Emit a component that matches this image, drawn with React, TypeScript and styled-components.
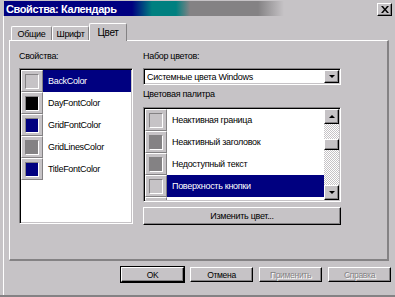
import React from 'react';
import styled, { createGlobalStyle, css } from 'styled-components';

const BG = '#c6c3c6';
const DARK = '#848284';
const NAVY = '#000080';

const Global = createGlobalStyle`
  html, body { margin: 0; padding: 0; background: ${BG}; }
  * { box-sizing: border-box; }
`;

const Window = styled.div`
  width: 395px;
  height: 297px;
  background: ${BG};
  display: flex;
  flex-direction: column;
  padding: 1px 3px 0 3px;
  border-bottom: 2px solid ${DARK};
  font-family: "Liberation Sans", Arial, sans-serif;
  font-size: 9px;
  letter-spacing: -0.3px;
  color: #000;
  overflow: hidden;
`;

const TitleBar = styled.div`
  height: 15px;
  margin-left: 1px;
  display: flex;
  align-items: center;
  justify-content: space-between;
  padding: 0 0 0 2px;
  background: linear-gradient(
    to right,
    ${NAVY} 0px,
    ${NAVY} 128px,
    #008080 148px,
    #008080 172px,
    ${DARK} 186px,
    ${DARK} 254px,
    ${BG} 280px
  );
`;

const Title = styled.span`
  color: #fff;
  font-weight: bold;
  font-size: 11px;
  letter-spacing: -0.4px;
`;

const raised = css`
  background: ${BG};
  border-top: 1px solid #fff;
  border-left: 1px solid #fff;
  border-right: 1px solid #000;
  border-bottom: 1px solid #000;
  box-shadow: inset -1px -1px 0 ${DARK};
`;

const sunken = css`
  border-top: 1px solid ${DARK};
  border-left: 1px solid ${DARK};
  border-right: 1px solid #fff;
  border-bottom: 1px solid #fff;
  box-shadow: inset 1px 1px 0 #000, inset -1px -1px 0 ${BG};
`;

const CloseButton = styled.div`
  ${raised};
  width: 15px;
  height: 13px;
  display: flex;
  align-items: center;
  justify-content: center;
  margin-top: 1px;
`;

const Body = styled.div`
  flex: 1;
  display: flex;
  flex-direction: column;
  border-left: 1px solid #fff;
  padding: 7px 0 0 5px;
`;

const TabStrip = styled.div`
  display: flex;
  align-items: flex-end;
  height: 17px;
  padding-left: 2px;
  position: relative;
  z-index: 1;
`;

const Tab = styled.div<{ $w: number; $active?: boolean }>`
  width: ${(p) => p.$w}px;
  height: ${(p) => (p.$active ? 18 : 14)}px;
  margin-bottom: ${(p) => (p.$active ? -1 : 0)}px;
  background: ${BG};
  border-top: 1px solid #fff;
  border-left: 1px solid #fff;
  border-right: 1px solid ${DARK};
  border-radius: 2px 2px 0 0;
  display: flex;
  justify-content: center;
  padding-top: ${(p) => (p.$active ? 3 : 2)}px;
  font-size: ${(p) => (p.$active ? 10 : 9)}px;
`;

const Panel = styled.div`
  width: 380px;
  height: 221px;
  border-top: 1px solid #fff;
  border-left: 1px solid #fff;
  border-right: 2px solid ${DARK};
  border-bottom: 2px solid ${DARK};
  padding: 9px 0 0 9px;
  display: grid;
  grid-template-columns: 114px 198px;
  column-gap: 10px;
  align-items: start;
`;

const Column = styled.div`
  display: flex;
  flex-direction: column;
`;

const Label = styled.div<{ $top?: number; $bottom?: number }>`
  height: 12px;
  line-height: 12px;
  margin-top: ${(p) => p.$top ?? 0}px;
  margin-bottom: ${(p) => p.$bottom ?? 6}px;
`;

const ListBox = styled.div<{ $h: number }>`
  ${sunken};
  height: ${(p) => p.$h}px;
  background: #fff;
  padding: 1px;
  display: flex;
  overflow: hidden;
`;

const Rows = styled.div`
  flex: 1;
  display: flex;
  flex-direction: column;
  overflow: hidden;
`;

const Row = styled.div`
  display: flex;
  height: 22px;
  flex-shrink: 0;
`;

const SwatchCell = styled.div`
  width: 22px;
  height: 22px;
  flex-shrink: 0;
  background: ${BG};
  border-top: 1px solid #fff;
  border-left: 1px solid #fff;
  border-right: 1px solid ${DARK};
  border-bottom: 1px solid ${DARK};
  display: flex;
  align-items: center;
  justify-content: center;
`;

const Swatch = styled.div<{ $c: string }>`
  width: 14px;
  height: 15px;
  background: ${(p) => p.$c};
  border-top: 1px solid ${DARK};
  border-left: 1px solid ${DARK};
  border-right: 1px solid #fff;
  border-bottom: 1px solid #fff;
`;

const RowText = styled.div<{ $sel?: boolean }>`
  flex: 1;
  line-height: 22px;
  padding-left: 5px;
  white-space: nowrap;
  overflow: hidden;
  background: ${(p) => (p.$sel ? NAVY : '#fff')};
  color: ${(p) => (p.$sel ? '#fff' : '#000')};
`;

const Combo = styled.div`
  ${sunken};
  height: 17px;
  background: #fff;
  display: flex;
  align-items: center;
  padding: 1px 1px 1px 3px;
`;

const ComboText = styled.div`
  flex: 1;
  white-space: nowrap;
  overflow: hidden;
`;

const ArrowButton = styled.div<{ $h?: number }>`
  ${raised};
  width: 15px;
  height: ${(p) => p.$h ?? 13}px;
  flex-shrink: 0;
  display: flex;
  align-items: center;
  justify-content: center;
`;

const Triangle = styled.div<{ $up?: boolean }>`
  width: 0;
  height: 0;
  border-left: 3px solid transparent;
  border-right: 3px solid transparent;
  ${(p) =>
    p.$up
      ? css`border-bottom: 3px solid #000;`
      : css`border-top: 3px solid #000;`}
`;

const ScrollBar = styled.div`
  width: 15px;
  flex-shrink: 0;
  display: flex;
  flex-direction: column;
`;

const Track = styled.div`
  flex: 1;
  background: repeating-conic-gradient(#fff 0 25%, ${BG} 0 50%) 0 0 / 2px 2px;
`;

const Thumb = styled.div`
  ${raised};
  height: 11px;
  margin-top: 15px;
`;

const WideButton = styled.div`
  ${raised};
  height: 18px;
  margin-top: 5px;
  display: flex;
  align-items: center;
  justify-content: center;
`;

const ButtonRow = styled.div`
  display: flex;
  justify-content: flex-end;
  gap: 6px;
  margin-top: 6px;
  padding-right: 1px;
`;

const DlgButton = styled.div<{ $default?: boolean; $disabled?: boolean }>`
  ${raised};
  width: 63px;
  height: 15px;
  display: flex;
  align-items: center;
  justify-content: center;
  font-size: 8.5px;
  color: ${(p) => (p.$disabled ? DARK : '#000')};
  text-shadow: ${(p) => (p.$disabled ? '1px 1px 0 #fff' : 'none')};
  ${(p) =>
    p.$default &&
    css`
      outline: 1px solid #000;
    `}
`;

const props = [
  { name: 'BackColor', color: BG, sel: true },
  { name: 'DayFontColor', color: '#000' },
  { name: 'GridFontColor', color: NAVY },
  { name: 'GridLinesColor', color: DARK },
  { name: 'TitleFontColor', color: NAVY },
];

const palette = [
  { name: 'Неактивная граница', color: BG },
  { name: 'Неактивный заголовок', color: DARK },
  { name: 'Недоступный текст', color: DARK },
  { name: 'Поверхность кнопки', color: BG, sel: true },
  { name: '', color: '#000' },
];

export default function App() {
  return (
    <>
      <Global />
      <Window>
        <TitleBar>
          <Title>Свойства: Календарь</Title>
          <CloseButton>
            <svg width="8" height="7" viewBox="0 0 8 7">
              <path d="M0 0h2l2 2.5L6 0h2L5 3.5 8 7H6L4 4.5 2 7H0l3-3.5z" fill="#000" />
            </svg>
          </CloseButton>
        </TitleBar>
        <Body>
          <TabStrip>
            <Tab $w={41}>Общие</Tab>
            <Tab $w={37}>Шрифт</Tab>
            <Tab $w={38} $active>
              Цвет
            </Tab>
          </TabStrip>
          <Panel>
            <Column>
              <Label>Свойства:</Label>
              <ListBox $h={156}>
                <Rows>
                  {props.map((p) => (
                    <Row key={p.name}>
                      <SwatchCell>
                        <Swatch $c={p.color} />
                      </SwatchCell>
                      <RowText $sel={p.sel}>{p.name}</RowText>
                    </Row>
                  ))}
                </Rows>
              </ListBox>
            </Column>
            <Column>
              <Label>Набор цветов:</Label>
              <Combo>
                <ComboText>Системные цвета Windows</ComboText>
                <ArrowButton>
                  <Triangle />
                </ArrowButton>
              </Combo>
              <Label $top={3} $bottom={7}>
                Цветовая палитра
              </Label>
              <ListBox $h={95}>
                <Rows>
                  {palette.map((p, i) => (
                    <Row key={i}>
                      <SwatchCell>
                        <Swatch $c={p.color} />
                      </SwatchCell>
                      <RowText $sel={p.sel}>{p.name}</RowText>
                    </Row>
                  ))}
                </Rows>
                <ScrollBar>
                  <ArrowButton $h={15}>
                    <Triangle $up />
                  </ArrowButton>
                  <Track>
                    <Thumb />
                  </Track>
                  <ArrowButton $h={15}>
                    <Triangle />
                  </ArrowButton>
                </ScrollBar>
              </ListBox>
              <WideButton>Изменить цвет...</WideButton>
            </Column>
          </Panel>
          <ButtonRow>
            <DlgButton $default>OK</DlgButton>
            <DlgButton>Отмена</DlgButton>
            <DlgButton $disabled>Применить</DlgButton>
            <DlgButton $disabled>Справка</DlgButton>
          </ButtonRow>
        </Body>
      </Window>
    </>
  );
}
